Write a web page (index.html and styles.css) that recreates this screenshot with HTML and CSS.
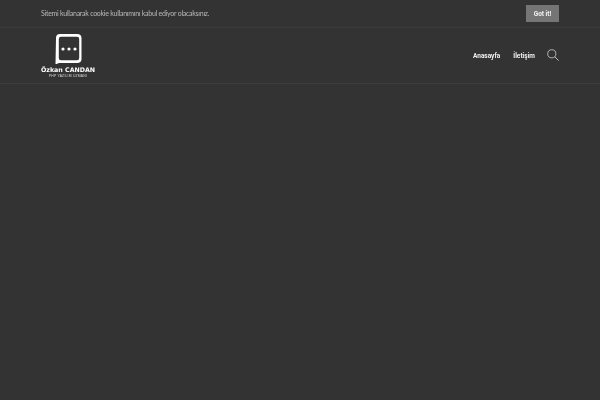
FILE: index.html
```html
<!DOCTYPE html>
<html lang="tr">
<head>
<meta charset="utf-8">
<title>Özkan CANDAN</title>
<link rel="stylesheet" href="styles.css">
</head>
<body>
<div class="cookie">
  <div class="wrap cookie-row">
    <p class="cookie-text">Sitemi kullanarak cookie kullanımını kabul ediyor olacaksınız.</p>
    <a class="got" href="#">Got it!</a>
  </div>
</div>
<header class="header">
  <div class="wrap header-row">
    <a class="logo" href="#">
      <svg class="bubble" width="28" height="31" viewBox="0 0 28 31">
        <path fill="#fff" fill-rule="evenodd" d="M6 1H23Q27.500 1 27.500 5V26Q27.500 30 23 30H5L1.500 31.500L2 5Q2 1 6 1ZM7 3.800Q4.800 3.800 4.800 6V25Q4.800 27.200 7 27.200H23Q25.200 27.200 25.200 25V6Q25.200 3.800 23 3.800Z"/>
        <circle class="bubble-dot" cx="9" cy="16" r="1.600"/>
        <circle class="bubble-dot" cx="15" cy="16" r="1.600"/>
        <circle class="bubble-dot" cx="21" cy="16" r="1.600"/>
      </svg>
      <span class="logo-name">Özkan CANDAN</span>
      <span class="logo-sub">PHP YAZILIM UZMANI</span>
    </a>
    <nav class="nav">
      <a href="#">Anasayfa</a>
      <a href="#">İletişim</a>
      <svg class="search" width="12" height="12" viewBox="0 0 13 13" fill="none" stroke="#ccc">
        <circle cx="5.200" cy="5.200" r="4.400" stroke-width="0.900"/>
        <path d="M8.400 8.400L12.500 12.500" stroke-width="1"/>
      </svg>
    </nav>
  </div>
</header>
</body>
</html>
```
FILE: styles.css
```css
* { box-sizing: border-box; }
html, body { margin: 0; height: 100%; }
body { background: #333333; font-family: Lato, "Open Sans", sans-serif; overflow: hidden; }
a { text-decoration: none; }
.wrap { width: 518px; margin: 0 0 0 41px; display: flex; justify-content: space-between; will-change: transform; }
.cookie { height: 28px; border-bottom: 1px solid #3b3b3b; }
.cookie-row { align-items: center; height: 27px; }
.cookie-text { margin: 0 0 2px; font-size: 7px; letter-spacing: -0.260px; color: #b8b8b8; }
.got { width: 33px; height: 17px; background: #757575; color: #f2f2f2; font-family: Roboto, sans-serif; font-size: 6.500px; font-weight: 700; display: flex; align-items: center; justify-content: center; }
.header { height: 56px; border-bottom: 1px solid #3d3d3d; }
.header-row { align-items: center; height: 55px; }
.logo { display: flex; flex-direction: column; align-items: center; width: 54px; color: #fff; }
.bubble { display: block; margin-bottom: 2px; }
.bubble-dot { fill: #fff; }
.logo-name { font-family: "DejaVu Sans", sans-serif; font-size: 6.300px; font-weight: 700; line-height: 8px; white-space: nowrap; }
.logo-sub { font-family: "Liberation Sans", sans-serif; font-size: 3.400px; letter-spacing: 0.200px; line-height: 4px; color: #ddd; white-space: nowrap; }
.nav { display: flex; align-items: center; gap: 13px; }
.nav a { font-family: Roboto, sans-serif; font-size: 6.500px; font-weight: 700; color: #f0f0f0; }
.search { margin: 0 0 2px -1px; display: block; }
```
